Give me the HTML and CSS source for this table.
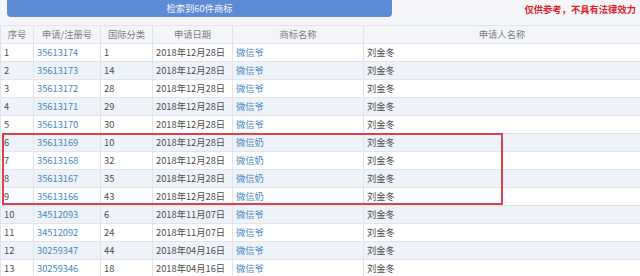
FILE: index.html
```html
<!DOCTYPE html>
<html lang="zh">
<head>
<meta charset="utf-8">
<link rel="stylesheet" href="styles.css">
</head>
<body>
<div class="top">
  <div class="searchbar">检索到60件商标</div>
  <div class="notice">仅供参考，不具有法律效力</div>
</div>
<div class="tablewrap">
<table class="grid">
  <colgroup>
    <col class="c1"><col class="c2"><col class="c3"><col class="c4"><col class="c5"><col class="c6">
  </colgroup>
  <thead>
    <tr><th>序号</th><th>申请/注册号</th><th>国际分类</th><th>申请日期</th><th>商标名称</th><th>申请人名称</th></tr>
  </thead>
  <tbody>
    <tr><td>1</td><td class="lnk">35613174</td><td>1</td><td>2018年12月28日</td><td class="lnk">微信爷</td><td>刘金冬</td></tr>
    <tr><td>2</td><td class="lnk">35613173</td><td>14</td><td>2018年12月28日</td><td class="lnk">微信爷</td><td>刘金冬</td></tr>
    <tr><td>3</td><td class="lnk">35613172</td><td>28</td><td>2018年12月28日</td><td class="lnk">微信爷</td><td>刘金冬</td></tr>
    <tr><td>4</td><td class="lnk">35613171</td><td>29</td><td>2018年12月28日</td><td class="lnk">微信爷</td><td>刘金冬</td></tr>
    <tr><td>5</td><td class="lnk">35613170</td><td>30</td><td>2018年12月28日</td><td class="lnk">微信爷</td><td>刘金冬</td></tr>
    <tr><td>6</td><td class="lnk">35613169</td><td>10</td><td>2018年12月28日</td><td class="lnk">微信奶</td><td>刘金冬</td></tr>
    <tr><td>7</td><td class="lnk">35613168</td><td>32</td><td>2018年12月28日</td><td class="lnk">微信奶</td><td>刘金冬</td></tr>
    <tr><td>8</td><td class="lnk">35613167</td><td>35</td><td>2018年12月28日</td><td class="lnk">微信奶</td><td>刘金冬</td></tr>
    <tr><td>9</td><td class="lnk">35613166</td><td>43</td><td>2018年12月28日</td><td class="lnk">微信奶</td><td>刘金冬</td></tr>
    <tr><td>10</td><td class="lnk">34512093</td><td>6</td><td>2018年11月07日</td><td class="lnk">微信爷</td><td>刘金冬</td></tr>
    <tr><td>11</td><td class="lnk">34512092</td><td>24</td><td>2018年11月07日</td><td class="lnk">微信爷</td><td>刘金冬</td></tr>
    <tr><td>12</td><td class="lnk">30259347</td><td>44</td><td>2018年04月16日</td><td class="lnk">微信爷</td><td>刘金冬</td></tr>
    <tr><td>13</td><td class="lnk">30259346</td><td>18</td><td>2018年04月16日</td><td class="lnk">微信爷</td><td>刘金冬</td></tr>
  </tbody>
</table>
<div class="highlight"></div>
</div>
</body>
</html>
```

FILE: styles.css
```css
html, body {
  margin: 0;
  padding: 0;
  background: #f4f6f9;
  font-family: "Noto Sans CJK SC", "Microsoft YaHei", sans-serif;
  font-size: 9.3px;
  color: #4d4d4d;
  overflow: hidden;
}
.top {
  display: flex;
  align-items: flex-start;
  justify-content: space-between;
  height: 25px;
  padding: 0 4px 0 7px;
  box-sizing: border-box;
}
.searchbar {
  width: 385px;
  height: 17px;
  line-height: 17px;
  background: #5d8bd6;
  color: #f4f7fc;
  text-align: center;
  border-radius: 0 0 4px 4px;
}
.notice {
  color: #e2222b;
  font-weight: bold;
  line-height: 18px;
  font-size: 9.3px;
}
.tablewrap {
  position: relative;
}
.grid {
  width: 640px;
  border-collapse: collapse;
  table-layout: fixed;
  background: #fff;
}
.c1 { width: 33px; }
.c2 { width: 67px; }
.c3 { width: 52px; }
.c4 { width: 80px; }
.c5 { width: 131px; }
.c6 { width: 277px; }
.grid th, .grid td {
  height: 17px;
  padding: 0 0 0 3px;
  border: 1px solid #e0e5eb;
  white-space: nowrap;
  overflow: hidden;
  text-align: left;
  font-weight: normal;
  line-height: 17px;
}
.grid th {
  background: #f3f5f8;
  color: #808080;
  text-align: center;
  padding: 0;
}
.grid tbody tr:nth-child(even) td {
  background: #eef3f9;
}
.grid td.lnk {
  color: #4a87c4;
}
.highlight {
  position: absolute;
  left: 2px;
  top: 108px;
  width: 501px;
  height: 72px;
  border: 2px solid #e0414d;
  box-sizing: border-box;
  pointer-events: none;
}
```
